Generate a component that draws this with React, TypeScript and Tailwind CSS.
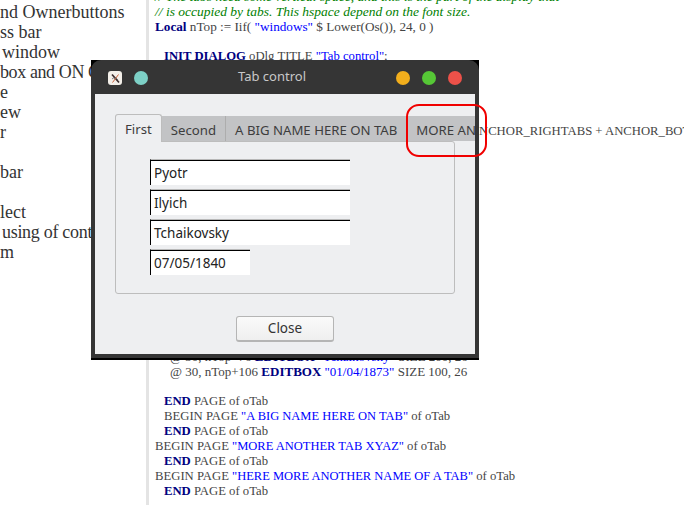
const SERIF = 'font-["Liberation_Serif",serif]';

const sideLines = [
  { text: 'nd Ownerbuttons', cls: '' },
  { text: 'ss bar', cls: '' },
  { text: 'window', cls: 'pl-[2px]' },
  { text: 'box and ON CHANGE', cls: 'tracking-[-0.4px]' },
  { text: 'e', cls: '' },
  { text: 'ew', cls: '' },
  { text: 'r', cls: '' },
  { text: '', cls: '' },
  { text: 'bar', cls: '' },
  { text: '', cls: '' },
  { text: 'lect', cls: '' },
  { text: 'using of controls', cls: 'pl-[2px] tracking-[-0.3px]' },
  { text: 'm', cls: '' },
];

function Kw({ children }: { children: string }) {
  return <b className="text-[#000080]">{children}</b>;
}

function Str({ children }: { children: string }) {
  return <span className="text-[#0000ff]">{children}</span>;
}

function CapStr({ children }: { children: string }) {
  return <span className="text-[#0000ff] text-[12.5px]">{children}</span>;
}

function Line({ children, indent = '' }: { children?: React.ReactNode; indent?: string }) {
  return <div className={`h-[15px] leading-[15px] whitespace-nowrap ${indent}`}>{children}</div>;
}

function TabItem({ label, active }: { label: string; active?: boolean }) {
  if (active) {
    return (
      <div className="h-[28px] px-[9px] pt-[5px] bg-[#eeeff1] border border-b-0 border-[#bdbdbd] rounded-t-[3px] text-[13.2px] leading-[18px] text-[#3d3d3d] z-10">
        {label}
      </div>
    );
  }
  return (
    <div className="h-[25px] mt-[2px] px-[9px] pt-[5px] bg-[#c2c3c5] border-r border-[#adadad] text-[13.2px] leading-[18px] text-[#3d3d3d] whitespace-nowrap">
      {label}
    </div>
  );
}

function Field({ value, width }: { value: string; width: string }) {
  return (
    <div className={`h-[26px] ${width} bg-white border-t border-l border-t-[#b8b8b8] border-l-black shadow-[inset_0_1px_0_#000] text-[13.5px] pt-[1px] leading-[25px] pl-[3px] text-[#222]`}>
      {value}
    </div>
  );
}

function TabDialog() {
  return (
    <div className="absolute left-[91px] top-[60px] w-[388px] h-[300px] bg-black flex flex-col font-['Noto_Sans',sans-serif]">
      <div className="h-[298px] bg-[#353535] rounded-t-[10px] px-[4px] pb-[4px] flex flex-col">
        <div className="h-[34px] pt-[2px] shrink-0 flex items-center">
          <div className="ml-[13px] w-[14px] h-[14px] rounded-[3px] bg-[#f3efe9] flex items-center justify-center">
            <svg width="11" height="11" viewBox="0 0 11 11">
              <path d="M2 1.5 L9 9.5" stroke="#3a2a2a" strokeWidth="1.6" />
              <path d="M8.5 1.5 L2.5 9.5" stroke="#c9603a" strokeWidth="1" />
              <path d="M2 6 Q5 3 8 7" stroke="#555" strokeWidth="0.7" fill="none" />
            </svg>
          </div>
          <div className="ml-[12px] w-[14px] h-[14px] rounded-full bg-[#7dd0c6]" />
          <div className="flex-1 text-center text-[13px] -mt-[2px] text-[#c8c8c8]">Tab control</div>
          <div className="flex gap-[12px] mr-[13px]">
            <div className="w-[14px] h-[14px] rounded-full bg-[#f2ae1c]" />
            <div className="w-[14px] h-[14px] rounded-full bg-[#56c736]" />
            <div className="w-[14px] h-[14px] rounded-full bg-[#ec5149]" />
          </div>
        </div>
        <div className="flex-1 bg-[#eeeff1] overflow-hidden px-[20px] pt-[20px] flex flex-col">
          <div className="flex items-start h-[27px] w-[600px]">
            <TabItem label="First" active />
            <TabItem label="Second" />
            <TabItem label="A BIG NAME HERE ON TAB" />
            <TabItem label="MORE ANOTHER TAB XYAZ" />
          </div>
          <div className="w-[340px] h-[153px] border border-[#bdbdbd] rounded-b-[3px] rounded-tr-[3px] pl-[34px] pt-[17px] flex flex-col gap-[4px]">
            <Field value="Pyotr" width="w-[200px]" />
            <Field value="Ilyich" width="w-[200px]" />
            <Field value="Tchaikovsky" width="w-[200px]" />
            <Field value="07/05/1840" width="w-[100px]" />
          </div>
          <div className="mt-[22px] w-[340px] flex justify-center">
            <button className="w-[98px] h-[26px] pb-[2px] bg-gradient-to-b from-[#fafafa] to-[#efefef] border border-[#b5b5b5] border-b-2 rounded-[3px] text-[13.5px] leading-[18px] text-[#333]">
              Close
            </button>
          </div>
        </div>
      </div>
    </div>
  );
}

export default function App() {
  return (
    <div className={`relative w-[684px] h-[505px] overflow-hidden bg-white flex ${SERIF}`}>
      <div className="w-[146px] shrink-0 pt-[2px] text-[18px] leading-[20px] text-[#333] overflow-hidden">
        {sideLines.map((l, i) => (
          <div key={i} className={`h-[20px] whitespace-nowrap ${l.cls}`}>{l.text}</div>
        ))}
      </div>
      <div className="flex-1 min-w-0 border-l-[3px] border-[#e4e4e4] pl-[6px] text-[13.2px] text-[#444] overflow-hidden -mt-[11px]">
        <div className="h-[15px] leading-[15px] whitespace-nowrap italic text-[#008000] text-[13.5px]">
          // The tabs need some vertical space, and this is the part of the display that
        </div>
        <div className="h-[15px] leading-[15px] whitespace-nowrap italic text-[#008000] text-[13.5px]">
          // is occupied by tabs. This hspace depend on the font size.
        </div>
        <Line><Kw>Local</Kw> nTop := Iif( <Str>"windows"</Str> $ Lower(Os()), 24, 0 )</Line>
        <Line />
        <Line indent="pl-[9px] text-[12.7px]"><Kw>INIT DIALOG</Kw> oDlg TITLE <Str>"Tab control"</Str>;</Line>
        <Line />
        <Line />
        <Line />
        <Line />
        <Line indent="pl-[324px] text-[12.7px]">NCHOR_RIGHTABS + ANCHOR_BOTTOMBORDER</Line>
        <div className="h-[210px]" />
        <Line indent="pl-[15px] text-[13px]">@ 30, nTop+76 <Kw>EDITBOX</Kw> <Str>"Tchaikovsky"</Str> SIZE 200, 26</Line>
        <Line indent="pl-[15px] text-[13px]">@ 30, nTop+106 <Kw>EDITBOX</Kw> <Str>"01/04/1873"</Str> SIZE 100, 26</Line>
        <Line />
        <div className="text-[12.7px]">
          <Line indent="pl-[9px]"><Kw>END</Kw> PAGE of oTab</Line>
          <Line indent="pl-[9px]">BEGIN PAGE <CapStr>"A BIG NAME HERE ON TAB"</CapStr> of oTab</Line>
          <Line indent="pl-[9px]"><Kw>END</Kw> PAGE of oTab</Line>
          <Line>BEGIN PAGE <CapStr>"MORE ANOTHER TAB XYAZ"</CapStr> of oTab</Line>
          <Line indent="pl-[9px]"><Kw>END</Kw> PAGE of oTab</Line>
          <Line>BEGIN PAGE <CapStr>"HERE MORE ANOTHER NAME OF A TAB"</CapStr> of oTab</Line>
          <Line indent="pl-[9px]"><Kw>END</Kw> PAGE of oTab</Line>
        </div>
      </div>
      <TabDialog />
      <div className="absolute left-[406px] top-[104px] w-[81px] h-[53px] border-2 border-[#f00000] rounded-[13px]" />
    </div>
  );
}
